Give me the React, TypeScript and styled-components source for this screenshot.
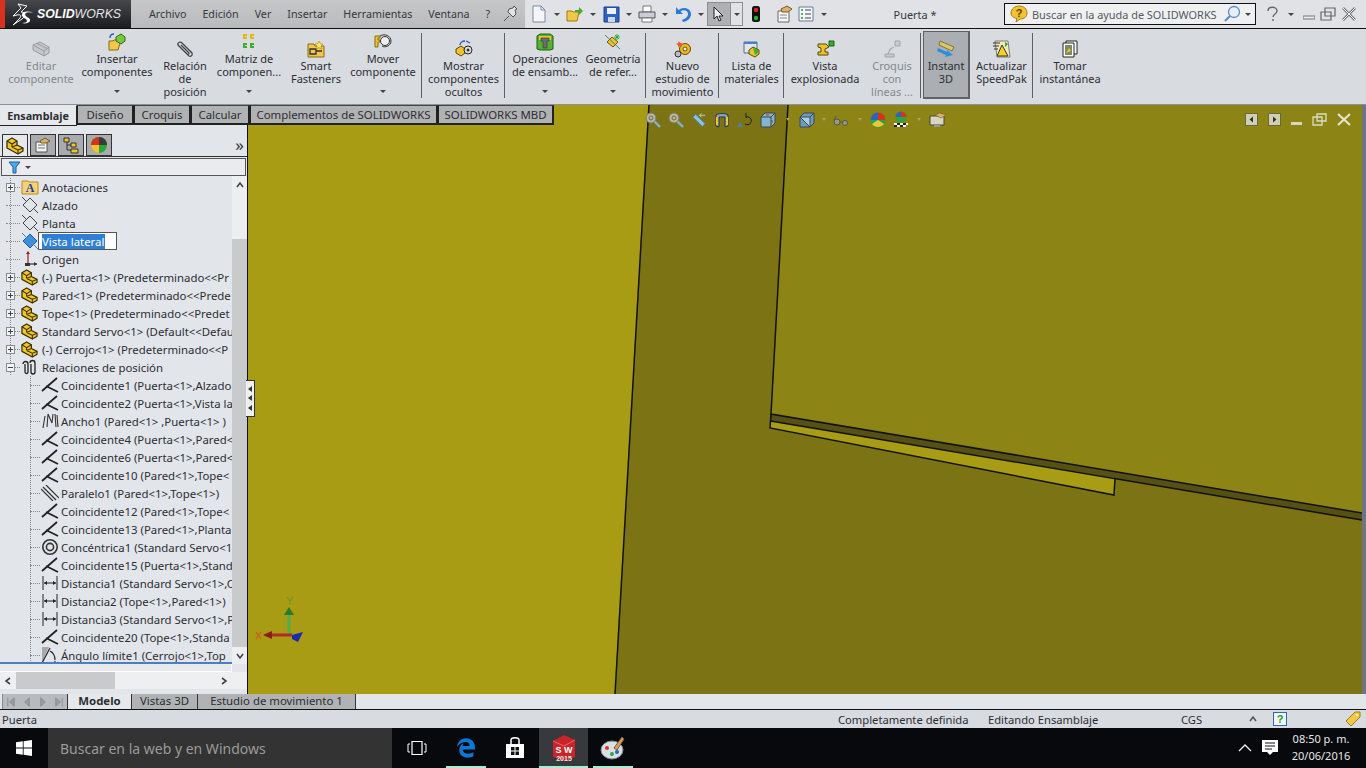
import React from 'react';
import styled, { createGlobalStyle } from 'styled-components';
import { FaEdgeLegacy } from 'react-icons/fa';

const GlobalStyle = createGlobalStyle`
  html, body {
    margin: 0;
    padding: 0;
    overflow: hidden;
    background: #d8dbe0;
  }
`;

const font = `"Noto Sans", "Open Sans", sans-serif`;

const Screen = styled.div`
  width: 1366px;
  height: 768px;
  display: flex;
  flex-direction: column;
  overflow: hidden;
  font-family: ${font};
  font-size: 11.4px;
  color: #2c2e32;
`;

/* ---------- title bar ---------- */
const TitleBar = styled.div`
  height: 28px;
  flex: none;
  display: flex;
  align-items: center;
  background: #e0e2e6;
  border-bottom: 1px solid #111;
`;

const Logo = styled.div`
  width: 126px;
  height: 28px;
  flex: none;
  display: flex;
  align-items: center;
  gap: 2px;
  padding-left: 4px;
  box-sizing: border-box;
  margin-left: 5px;
  background: linear-gradient(#46484c, #1b1c1f);
  position: relative;
  &::before {
    content: '';
    position: absolute;
    left: -5px;
    top: 0;
    width: 5px;
    height: 28px;
    background: #d8321f;
  }
`;

const LogoText = styled.span`
  font-family: "Liberation Sans", sans-serif;
  font-size: 12.3px;
  font-style: italic;
  font-weight: 700;
  color: #fff;
  em {
    font-weight: 400;
    color: #e4e4e4;
  }
`;

const MenuBar = styled.div`
  width: 394px;
  height: 28px;
  flex: none;
  display: flex;
  align-items: center;
  gap: 16px;
  padding-left: 18px;
  box-sizing: border-box;
  background: linear-gradient(#c6c7c9, #b9babc);
  color: #36383b;
  font-size: 10.7px;
`;

const MenuIcon = styled.span`
  margin-left: -4px;
  display: flex;
`;

const QuickBar = styled.div`
  width: 365px;
  flex: none;
  display: flex;
  align-items: center;
  padding-left: 3px;
  box-sizing: border-box;
`;

const QuickIcon = styled.span<{ $w?: number }>`
  width: ${(p) => p.$w ?? 22}px;
  height: 22px;
  flex: none;
  display: flex;
  align-items: center;
  justify-content: center;
`;

const SelectBox = styled.span`
  display: flex;
  height: 22px;
  border: 1px solid #8b8d90;
  margin: 0 2px 0 -1px;
`;

const SelectMain = styled.span`
  width: 22px;
  display: flex;
  align-items: center;
  justify-content: center;
  background: #aeb0b3;
`;

const SelectDrop = styled.span`
  width: 11px;
  display: flex;
  align-items: center;
  justify-content: center;
  border-left: 1px solid #8b8d90;
`;

const Caret = styled.span`
  display: block;
  flex: none;
  width: 0;
  height: 0;
  border-left: 3px solid transparent;
  border-right: 3px solid transparent;
  border-top: 3px solid #444;
  margin: 0 4px;
`;

const SelectCaret = styled(Caret)`
  margin: 0;
`;

const DocTitle = styled.div`
  width: 114px;
  flex: none;
  text-align: center;
  color: #36383b;
  font-size: 10.9px;
  padding-right: 64px;
  box-sizing: border-box;
`;

const HelpSearch = styled.div`
  width: 252px;
  height: 22px;
  flex: none;
  display: flex;
  align-items: center;
  box-sizing: border-box;
  border: 1px solid #111;
  background: #eef0f2;
  padding-left: 5px;
  color: #55585c;
  font-size: 10.9px;
  gap: 4px;
`;

const HelpSearchEnd = styled.span`
  margin-left: auto;
  display: flex;
  align-items: center;
`;

const WindowButtons = styled.div`
  display: flex;
  align-items: center;
  margin-left: 9px;
  gap: 5px;
`;

/* ---------- ribbon ---------- */
const Ribbon = styled.div`
  height: 75px;
  flex: none;
  display: flex;
  align-items: stretch;
  background: #d8dbe0;
  border-bottom: 1px solid #8e9094;
`;

const RibbonGroup = styled.div<{ $w: number; $divider?: boolean }>`
  width: ${(p) => p.$w}px;
  flex: none;
  display: flex;
  align-items: stretch;
  position: relative;
  ${(p) => p.$divider && `
    &::after {
      content: '';
      position: absolute;
      right: 0;
      top: 4px;
      height: 65px;
      width: 1px;
      background: #5c5e62;
    }
  `}
`;

const RibbonButton = styled.div<{ $w: number; $off?: boolean; $on?: boolean; $drop?: boolean }>`
  width: ${(p) => p.$w}px;
  flex: none;
  display: flex;
  flex-direction: column;
  align-items: center;
  text-align: center;
  line-height: 13px;
  box-sizing: border-box;
  white-space: nowrap;
  font-size: 11px;
  padding-top: ${(p) => (p.$drop ? 3 : p.$on ? 7 : 10)}px;
  color: ${(p) => (p.$off ? '#85888c' : '#2c2e32')};
  background: ${(p) => (p.$on ? '#abaeb3' : 'transparent')};
  ${(p) => p.$on && `
    border: 1px solid #5f6266;
    border-right-width: 2px;
    border-bottom-width: 2px;
    margin: 2px 0 5px 2px;
  `}
`;

const RibbonIcon = styled.div`
  height: 20px;
  flex: none;
  display: flex;
  align-items: center;
  justify-content: center;
`;

const RibbonCaret = styled.span`
  height: 13px;
  flex: none;
  margin-top: 7px;
  display: flex;
  align-items: center;
  justify-content: center;
`;

/* ---------- workspace ---------- */
const Workspace = styled.div`
  position: relative;
  flex: 1;
  min-height: 0;
  display: flex;
`;

const TabStrip = styled.div`
  position: absolute;
  left: 0;
  top: 0;
  height: 21px;
  display: flex;
  z-index: 3;
`;

const PageTab = styled.div<{ $w: number; $active?: boolean }>`
  width: ${(p) => p.$w}px;
  height: ${(p) => (p.$active ? 21 : 20)}px;
  flex: none;
  display: flex;
  align-items: center;
  justify-content: center;
  box-sizing: border-box;
  white-space: nowrap;
  padding-bottom: 1px;
  font-size: ${(p) => (p.$active ? 10.8 : 11.4)}px;
  font-weight: ${(p) => (p.$active ? 700 : 400)};
  color: #2c2e32;
  background: ${(p) => (p.$active ? '#e6e8ec' : '#b1b2b4')};
  border: 1px solid #222;
  border-left: ${(p) => (p.$active ? 'none' : '1px solid #222')};
  border-top: ${(p) => (p.$active ? '1px solid #e6e8ec' : '1px solid #444')};
  border-bottom-width: ${(p) => (p.$active ? 1 : 2)}px;
  border-right-width: ${(p) => (p.$active ? 1 : 2)}px;
`;

const Panel = styled.div`
  width: 248px;
  flex: none;
  display: flex;
  flex-direction: column;
  box-sizing: border-box;
  padding-top: 21px;
  background: #e2e5ea;
  border-right: 1px solid #111;
`;

const PanelTabs = styled.div`
  height: 30px;
  flex: none;
  display: flex;
  align-items: flex-end;
  padding: 0 0 0 2px;
  border-bottom: 1px solid #333;
`;

const PanelTab = styled.div<{ $active?: boolean }>`
  width: 26px;
  height: 22px;
  margin-right: 2px;
  display: flex;
  align-items: center;
  justify-content: center;
  box-sizing: border-box;
  background: ${(p) => (p.$active ? '#e6e8ec' : '#a9abae')};
  border: 1px solid #333;
  ${(p) => p.$active && 'border-bottom: none;'}
`;

const Chevron = styled.span`
  margin-left: auto;
  margin-right: 3px;
  margin-bottom: 3px;
  font-size: 17px;
  line-height: 17px;
  color: #333;
`;

const FilterRow = styled.div`
  height: 16px;
  flex: none;
  margin: 1px 1px 0 1px;
  border: 1px solid #555;
  background: #e9ebee;
  display: flex;
  align-items: center;
  padding-left: 6px;
`;

const TreeWrap = styled.div`
  height: 488px;
  flex: none;
  display: flex;
`;

const Tree = styled.div`
  width: 232px;
  flex: none;
  overflow: hidden;
  box-sizing: border-box;
  padding-top: 2px;
  border-bottom: 2px solid #4a7fc1;
`;

const dottedLine = 'repeating-linear-gradient(to bottom, #888 0 1px, transparent 1px 2px)';

const TreeRow = styled.div<{ $deep?: boolean }>`
  height: 18px;
  display: flex;
  align-items: center;
  white-space: nowrap;
  font-size: 11.4px;
  padding-left: ${(p) => (p.$deep ? 30 : 6)}px;
  background-image: ${dottedLine};
  background-size: 1px 100%;
  background-repeat: no-repeat;
  background-position: ${(p) => (p.$deep ? 30 : 10)}px 0;
`;

const Expander = styled.span`
  width: 9px;
  height: 9px;
  flex: none;
  box-sizing: border-box;
  border: 1px solid #8a8c90;
  background: #f2f3f5;
  position: relative;
  &::before {
    content: '';
    position: absolute;
    left: 1px;
    right: 1px;
    top: 3px;
    height: 1px;
    background: #444;
  }
`;

const ExpanderPlus = styled(Expander)`
  &::after {
    content: '';
    position: absolute;
    top: 1px;
    bottom: 1px;
    left: 3px;
    width: 1px;
    background: #444;
  }
`;

const TreeDots = styled.span<{ $w: number }>`
  width: ${(p) => p.$w}px;
  flex: none;
  border-top: 1px dotted #888;
`;

const TreeIcon = styled.span`
  width: 19px;
  height: 18px;
  flex: none;
  display: flex;
  align-items: center;
  justify-content: center;
  margin-right: 3px;
`;

const DeepIcon = styled(TreeIcon)`
  margin-right: 2px;
`;

const RenameBox = styled.span`
  display: inline-flex;
  align-items: center;
  width: 79px;
  height: 18px;
  margin-left: -4px;
  padding-left: 3px;
  box-sizing: border-box;
  background: #fff;
  border: 1px solid #555;
  span {
    background: #2f7fd6;
    color: #fff;
    line-height: 15px;
    padding-right: 1px;
  }
`;

const VScroll = styled.div`
  width: 15px;
  flex: none;
  display: flex;
  flex-direction: column;
  background: #eceef0;
`;

const ScrollArrow = styled.div`
  height: 17px;
  flex: none;
  display: flex;
  align-items: center;
  justify-content: center;
`;

const VThumbSpacer = styled.div`
  height: 46px;
  flex: none;
`;

const VThumb = styled.div`
  flex: 1;
  background: #c9cacc;
`;

const PanelBottomGap = styled.div`
  height: 7px;
  flex: none;
  margin-right: 15px;
  background: #e8eaee;
  border-right: 1px solid #fff;
  border-bottom: 1px solid #fff;
`;

const HScroll = styled.div`
  height: 17px;
  flex: none;
  display: flex;
  align-items: center;
  background: #eeeff1;
`;

const HArrow = styled.span`
  width: 16px;
  flex: none;
  display: flex;
  justify-content: center;
`;

const HThumb = styled.div`
  width: 99px;
  height: 17px;
  background: #c9cacc;
  margin-right: auto;
`;

const HScrollEnd = styled.span`
  width: 15px;
  flex: none;
`;

const Viewport = styled.div`
  position: relative;
  flex: 1;
  min-width: 0;
  overflow: hidden;
  background: #7c7414;
`;

const Scene = styled.svg`
  display: block;
`;

const HeadsUp = styled.div`
  position: absolute;
  left: 397px;
  top: 6px;
  display: flex;
  align-items: center;
  gap: 7px;
`;

const HudGap = styled.span<{ $w: number }>`
  width: ${(p) => p.$w}px;
  display: flex;
  justify-content: center;
  &::after {
    content: '';
    border-left: 2px solid transparent;
    border-right: 2px solid transparent;
    border-top: 3px solid #a8a268;
  }
`;

const ViewButtons = styled.div`
  position: absolute;
  right: 11px;
  top: 8px;
  display: flex;
  align-items: center;
  gap: 10px;
`;

const Triad = styled.svg`
  position: absolute;
  left: 7px;
  top: 490px;
`;

const CollapseHandle = styled.div`
  position: absolute;
  left: 246px;
  top: 275px;
  width: 9px;
  height: 37px;
  background: #eceef0;
  border: 1px solid #333;
  border-left: none;
  box-sizing: border-box;
  display: flex;
  flex-direction: column;
  align-items: center;
  justify-content: space-around;
  padding: 3px 0;
  z-index: 2;
`;

const HandleArrow = styled.span`
  width: 0;
  height: 0;
  border-top: 3px solid transparent;
  border-bottom: 3px solid transparent;
  border-right: 4px solid #333;
`;

const EdgeStrip = styled.div`
  width: 4px;
  flex: none;
  background: #6d7580;
`;

/* ---------- bottom tabs + status ---------- */
const BottomBar = styled.div`
  height: 15px;
  flex: none;
  display: flex;
  align-items: stretch;
  background: #e2e5ea;
  border-top: 1px solid #111;
  border-bottom: 1px solid #111;
  margin-top: -1px;
  padding-left: 2px;
`;

const Pager = styled.div`
  width: 66px;
  flex: none;
  display: flex;
  align-items: center;
  justify-content: space-around;
  box-sizing: border-box;
  background: #b8babd;
  border-right: 1px solid #333;
  border-left: 1px solid #888;
`;

const BottomTab = styled.div<{ $w: number; $active?: boolean }>`
  width: ${(p) => p.$w}px;
  flex: none;
  display: flex;
  align-items: center;
  justify-content: center;
  box-sizing: border-box;
  padding-bottom: 1px;
  font-size: 11.4px;
  line-height: 12px;
  font-weight: ${(p) => (p.$active ? 700 : 400)};
  background: ${(p) => (p.$active ? '#e6e8ec' : '#b1b2b4')};
  border-right: 1px solid #333;
`;

const StatusBar = styled.div`
  height: 18px;
  flex: none;
  display: flex;
  align-items: center;
  background: #d8dbe0;
  padding-left: 2px;
  font-size: 11.2px;
`;

const StatusCell = styled.span<{ $w: number }>`
  width: ${(p) => p.$w}px;
  flex: none;
  display: flex;
  align-items: center;
`;

const TaskBar = styled.div`
  height: 40px;
  flex: none;
  display: flex;
  align-items: center;
  background: #07090c;
  color: #fff;
`;

const StartButton = styled.div`
  width: 48px;
  height: 100%;
  flex: none;
  display: flex;
  align-items: center;
  justify-content: center;
`;

const SearchBox = styled.div`
  width: 344px;
  height: 100%;
  flex: none;
  display: flex;
  align-items: center;
  padding-left: 12px;
  box-sizing: border-box;
  background: #333333;
  color: #9a9a9a;
  font-size: 14px;
`;

const TaskIcon = styled.div<{ $active?: boolean; $run?: boolean }>`
  position: relative;
  width: 49px;
  height: 100%;
  flex: none;
  display: flex;
  align-items: center;
  justify-content: center;
  background: ${(p) => (p.$active ? '#37393c' : 'transparent')};
  ${(p) => (p.$active || p.$run) && `
    &::after {
      content: '';
      position: absolute;
      bottom: 0;
      height: 2px;
      left: ${p.$active ? 0 : 5}px;
      right: ${p.$active ? 0 : 4}px;
      background: #a6ecd0;
    }
  `}
`;

const Tray = styled.div`
  margin-left: auto;
  display: flex;
  align-items: center;
  gap: 10px;
  height: 100%;
`;

const Clock = styled.div`
  width: 66px;
  margin: 0 12px 2px 0;
  text-align: center;
  line-height: 17px;
  font-size: 11px;
  color: #e8e8e8;
`;

/* ---------- drawings ---------- */
const Cube = ({ size = 18 }: { size?: number }) => (
  <svg width={size} height={size} viewBox="0 0 18 18">
    <path d="M1 4l5-3 5 3v4l6 3v3l-5 3L1 11z" fill="#f2c623" stroke="#3a3000" strokeWidth="1.300" strokeLinejoin="round" />
    <path d="M1 4l5 3 5-3M6 7v3M6 10l6 3v4M12 13l5-2M6 10l5-2" fill="none" stroke="#3a3000" strokeWidth="1.100" />
  </svg>
);

const Plane = ({ active }: { active?: boolean }) => (
  <svg width="18" height="18" viewBox="0 0 18 18">
    <path d="M9 2l7 7-7 7-7-7z" fill={active ? '#3f8fdc' : 'none'} stroke={active ? '#1d5da8' : '#444'} />
    <path d="M1 1l5 5M12 12l5 5" stroke={active ? '#2f7fd6' : '#444'} />
  </svg>
);

const Coincident = () => (
  <svg width="18" height="16" viewBox="0 0 18 16">
    <path d="M16 1L1 14M5 9l12 6" fill="none" stroke="#222" strokeWidth="1.800" />
  </svg>
);

const Parallel = () => (
  <svg width="18" height="16" viewBox="0 0 18 16">
    <path d="M2 2l13 13M5 0l13 13M0 4l12 12" fill="none" stroke="#333" strokeWidth="1.200" />
  </svg>
);

const Width = () => (
  <svg width="18" height="16" viewBox="0 0 18 16">
    <path d="M2 15L4 3M6 14L7 1M7 1l4 9M11 10l1-9M14 1l1 13M16 2l1 12" fill="none" stroke="#333" strokeWidth="1.100" />
  </svg>
);

const Concentric = () => (
  <svg width="18" height="18" viewBox="0 0 18 18">
    <circle cx="9" cy="9" r="7.200" fill="none" stroke="#333" strokeWidth="1.600" />
    <circle cx="9" cy="9" r="3.600" fill="none" stroke="#333" strokeWidth="1.600" />
  </svg>
);

const Distance = () => (
  <svg width="18" height="16" viewBox="0 0 18 16">
    <path d="M2 1v14M16 1v14M3 8h12" stroke="#222" fill="none" />
    <path d="M3 8l3-2v4zM15 8l-3-2v4z" fill="#222" />
  </svg>
);

const Limit = () => (
  <svg width="18" height="18" viewBox="0 0 18 18">
    <path d="M1 1h7L1 16z" fill="#aaa" />
    <path d="M1 17L9 2M1 17h16M9 5c4 2 5 6 5 9M14 15v3" fill="none" stroke="#222" strokeWidth="1.200" />
  </svg>
);

const Folder = () => (
  <svg width="18" height="16" viewBox="0 0 18 16">
    <path d="M1 2h6l1 1h9v12H1z" fill="#f3d37a" stroke="#b98a20" />
    <text x="9" y="13" fontSize="12" fontWeight="700" fontFamily="Liberation Serif" textAnchor="middle" fill="#1d3f9a">A</text>
  </svg>
);

const Origin = () => (
  <svg width="16" height="16" viewBox="0 0 16 16">
    <path d="M6 2v11" stroke="#9c1c1c" strokeWidth="1.200" />
    <path d="M6 0l2 3H4z" fill="#9c1c1c" />
    <path d="M6 13h9" stroke="#333" strokeWidth="1.200" />
    <path d="M15 13l-3-2v4zM3 12h5v3H3z" fill="#333" />
  </svg>
);

const Clips = () => (
  <svg width="18" height="17" viewBox="0 0 18 17">
    <path d="M2 5a2.500 2.500 0 015 0v8a1.500 1.500 0 01-3 0V5M9 4a2.500 2.500 0 015 0v9a2 2 0 01-4 0V5" fill="none" stroke="#222" strokeWidth="1.300" />
  </svg>
);

const Tri = ({ dir = 'up', color = '#444' }: { dir?: 'up' | 'down' | 'left' | 'right'; color?: string }) => {
  const d = { up: 'M2 7l3-4 3 4', down: 'M2 3l3 4 3-4', left: 'M7 2L3 5l4 3', right: 'M3 2l4 3-4 3' }[dir];
  return (
    <svg width="10" height="10" viewBox="0 0 10 10">
      <path d={d} fill="none" stroke={color} strokeWidth="1.600" />
    </svg>
  );
};

const PagerIcon = ({ d }: { d: string }) => (
  <svg width="12" height="12" viewBox="0 0 13 13">
    <path d={d} fill="#9b9da0" stroke="#8a8c90" />
  </svg>
);

const Ic = {
  edit: (
    <svg width="20" height="18" viewBox="0 0 20 18">
      <path d="M2 5l7-3 9 5v6l-5 3-11-6z" fill="#c5c7ca" stroke="#9a9c9f" />
      <path d="M2 5l11 6v5M13 11l5-4M6 3.500l10 5" fill="none" stroke="#9a9c9f" />
    </svg>
  ),
  insert: (
    <svg width="18" height="18" viewBox="0 0 18 18">
      <path d="M1 8h4l1-1h7l-3 10H1z" fill="#f2c84a" stroke="#8a6a10" />
      <path d="M8 4l5-3 4 3v4l-4 3-5-3z" fill="#76c93a" stroke="#2c6a10" />
      <path d="M2 5c0-3 2-4 4-4" fill="none" stroke="#2a55c8" strokeWidth="1.400" />
    </svg>
  ),
  mate: (
    <svg width="18" height="18" viewBox="0 0 18 18">
      <path d="M5 8l8 8c2 1 4-1 3-3L6 3C4 1 1 3 2 5l9 9c1 1 2 0 2-1L5 5" fill="none" stroke="#444" strokeWidth="1.300" />
    </svg>
  ),
  pattern: (
    <svg width="16" height="18" viewBox="0 0 16 18">
      <path d="M2 1h4v2H4v1h2v2H2zM9 1h4v2h-2v1h2v2H9z" fill="#e9b80f" />
      <path d="M2 10h4v2H4v1h2v2H2zM9 10h4v2h-2v1h2v2H9z" fill="#3cae2b" />
    </svg>
  ),
  fastener: (
    <svg width="18" height="18" viewBox="0 0 18 18">
      <path d="M1 4h6l1 2h9v11H1z" fill="#f0c550" stroke="#8a6a10" />
      <path d="M3 9h6v5H3zM9 11h6" fill="none" stroke="#333" strokeWidth="1.300" />
      <path d="M12 1l1.300 2.600L16 4l-2 2 .5 3-2.500-1.500L9.500 9l.5-3-2-2 2.700-.4z" fill="#fbe36a" stroke="#a8860f" strokeWidth=".6" />
    </svg>
  ),
  move: (
    <svg width="18" height="18" viewBox="0 0 18 18">
      <path d="M1 3h5v2H4v2h2v2H4v5H1z" fill="#ecc42a" stroke="#8a6a10" />
      <circle cx="11" cy="8" r="4.500" fill="#eee" stroke="#333" />
      <path d="M6 3c5-3 11 0 11 5s-6 7-9 5" fill="none" stroke="#333" />
    </svg>
  ),
  hidden: (
    <svg width="20" height="18" viewBox="0 0 20 18">
      <path d="M2 9l5-3 4 3v4l-4 3-5-3z" fill="#eec32c" stroke="#5e4a08" />
      <circle cx="14" cy="10" r="4" fill="#ddd" stroke="#222" />
      <circle cx="14" cy="10" r="1.500" fill="#333" />
      <path d="M6 5c0-2 2-4 5-4M12 1l4 2" fill="none" stroke="#2a55c8" strokeWidth="1.300" />
    </svg>
  ),
  ops: (
    <svg width="18" height="18" viewBox="0 0 18 18">
      <path d="M1 3l3-2h10l3 2v13l-3 1H4l-3-1z" fill="#52b236" stroke="#205c10" />
      <path d="M3 3h12v4H3z" fill="#ecc42a" />
      <path d="M5 5h8v3h-2v7H7V8H5z" fill="#6e6e6e" stroke="#333" strokeWidth=".6" />
    </svg>
  ),
  ref: (
    <svg width="18" height="18" viewBox="0 0 18 18">
      <path d="M8 4l6 5-5 5-6-5z" fill="#ecc42a" stroke="#6a5a10" />
      <path d="M1 2l15 14" stroke="#2c6a8a" strokeWidth=".8" />
      <path d="M13 1v6M10 4h6M11 2l4 4M15 2l-4 4" stroke="#2aa82a" strokeWidth=".9" />
    </svg>
  ),
  study: (
    <svg width="18" height="18" viewBox="0 0 18 18">
      <circle cx="11" cy="9" r="5.500" fill="#efb820" stroke="#6a4a08" />
      <circle cx="11" cy="9" r="2" fill="#fff" stroke="#6a4a08" />
      <circle cx="4" cy="14" r="3" fill="#bbb" stroke="#333" />
      <path d="M5 1l1 2 2 0-1 2 1 2-2-1-2 1 0-2-2-1 2-1z" fill="#f05a1e" />
    </svg>
  ),
  bom: (
    <svg width="18" height="18" viewBox="0 0 18 18">
      <path d="M1 2h13v11H1z" fill="#dfe6f2" stroke="#5a6a8a" />
      <path d="M1 2h13v2H1z" fill="#4f7dc8" />
      <path d="M6 10l4-3 6 3v4l-4 3-6-3z" fill="#eec32c" stroke="#5e4a08" />
      <path d="M10 8l5 2v3l-3 2z" fill="#3eb22b" />
    </svg>
  ),
  explode: (
    <svg width="20" height="18" viewBox="0 0 20 18">
      <path d="M3 4h8l3 3-4 2v3h3v3H3v-3h3V8L3 7z" fill="#ecc42a" stroke="#5a4708" />
      <path d="M14 1h5v5h-5z" fill="#3cae2b" stroke="#205c10" />
    </svg>
  ),
  sketchOff: (
    <svg width="20" height="18" viewBox="0 0 20 18">
      <path d="M13 1h5v5h-5zM3 14h9v3H3zM6 14l2-5 4-2" fill="#c9cbce" stroke="#a2a4a7" />
    </svg>
  ),
  instant: (
    <svg width="18" height="18" viewBox="0 0 18 18">
      <path d="M3 1l14 6-2 4L2 5z" fill="#d8c66a" stroke="#6a5a10" strokeWidth=".7" />
      <path d="M1 8l9 4 0-2 6 5-8 2 1-2-9-4z" fill="#2a8fe0" />
    </svg>
  ),
  speedpak: (
    <svg width="20" height="18" viewBox="0 0 20 18">
      <path d="M3 1h13l2 16H5z" fill="#efe9c0" stroke="#555" strokeWidth=".7" />
      <path d="M10 5l6 11H5z" fill="#f4d21f" stroke="#333" />
      <path d="M1 3h7M1 6h6M2 9h4" stroke="#333" />
      <path d="M13 2l3 2-3 3z" fill="#36a62a" />
    </svg>
  ),
  snapshot: (
    <svg width="16" height="18" viewBox="0 0 16 18">
      <path d="M4 1h11v13H4z" fill="#fff" stroke="#222" />
      <path d="M1 3h11v14H1z" fill="#fff" stroke="#222" />
      <path d="M3 5h7v10H3z" fill="#7c8a6a" />
      <path d="M4 13l3-5 2 3z" fill="#e9c42a" />
    </svg>
  ),
};

const ZoomGlass = ({ fill }: { fill: string }) => (
  <svg width="16" height="16" viewBox="0 0 16 16">
    <path d="M9 9l6 6" stroke="#7fb2d8" strokeWidth="2.400" />
    <circle cx="6" cy="6" r="5" fill={fill} stroke="#777" />
    <circle cx="6" cy="6" r="2" fill="none" stroke="#666" />
  </svg>
);

const mates: { label: string; icon: React.ReactNode }[] = [
  { label: 'Coincidente1 (Puerta<1>,Alzado', icon: <Coincident /> },
  { label: 'Coincidente2 (Puerta<1>,Vista la', icon: <Coincident /> },
  { label: 'Ancho1 (Pared<1> ,Puerta<1> )', icon: <Width /> },
  { label: 'Coincidente4 (Puerta<1>,Pared<', icon: <Coincident /> },
  { label: 'Coincidente6 (Puerta<1>,Pared<', icon: <Coincident /> },
  { label: 'Coincidente10 (Pared<1>,Tope<', icon: <Coincident /> },
  { label: 'Paralelo1 (Pared<1>,Tope<1>)', icon: <Parallel /> },
  { label: 'Coincidente12 (Pared<1>,Tope<', icon: <Coincident /> },
  { label: 'Coincidente13 (Pared<1>,Planta', icon: <Coincident /> },
  { label: 'Concéntrica1 (Standard Servo<1', icon: <Concentric /> },
  { label: 'Coincidente15 (Puerta<1>,Stand', icon: <Coincident /> },
  { label: 'Distancia1 (Standard Servo<1>,C', icon: <Distance /> },
  { label: 'Distancia2 (Tope<1>,Pared<1>)', icon: <Distance /> },
  { label: 'Distancia3 (Standard Servo<1>,P', icon: <Distance /> },
  { label: 'Coincidente20 (Tope<1>,Standa', icon: <Coincident /> },
  { label: 'Ángulo límite1 (Cerrojo<1>,Top', icon: <Limit /> },
];

const parts = [
  '(-) Puerta<1> (Predeterminado<<Pr',
  'Pared<1> (Predeterminado<<Prede',
  'Tope<1> (Predeterminado<<Predet',
  'Standard Servo<1> (Default<<Defau',
  '(-) Cerrojo<1> (Predeterminado<<P',
];

const CaretRow = () => (
  <RibbonCaret>
    <Caret />
  </RibbonCaret>
);

export default function App() {
  return (
    <Screen>
      <GlobalStyle />
      <TitleBar>
        <Logo>
          <svg width="26" height="26" viewBox="0 0 26 26">
            <path d="M9 3l9 2-6 6c5 0 5 4 1 7l-9 6 6-6c3-3 2-5-2-4l-4 1 8-8z" fill="none" stroke="#fff" strokeWidth="1" />
            <path d="M24 12c-3-1-7-1-8 1-1 3 6 3 5 7-1 2-5 3-8 2 3 0 5-1 5-2 0-3-6-3-5-7 1-3 7-3 11-1z" fill="#fff" />
          </svg>
          <LogoText>SOLID<em>WORKS</em></LogoText>
        </Logo>
        <MenuBar>
          <span>Archivo</span>
          <span>Edición</span>
          <span>Ver</span>
          <span>Insertar</span>
          <span>Herramientas</span>
          <span>Ventana</span>
          <span>?</span>
          <MenuIcon>
            <svg width="18" height="18" viewBox="0 0 18 18">
              <path d="M7 11L2 16M6 7l5 5 3-3-1-4 2-1-3-3-1 2-4 1z" fill="#e4e4e4" stroke="#555" />
            </svg>
          </MenuIcon>
        </MenuBar>
        <QuickBar>
          <QuickIcon>
            <svg width="16" height="18" viewBox="0 0 16 18">
              <path d="M2 1h8l4 4v12H2z" fill="#f4f6fa" stroke="#7a8aa8" />
              <path d="M10 1v4h4" fill="none" stroke="#7a8aa8" />
            </svg>
          </QuickIcon>
          <Caret />
          <QuickIcon>
            <svg width="18" height="18" viewBox="0 0 18 18">
              <path d="M1 6h5l1 1h6l-2 9H1z" fill="#f2c84a" stroke="#a07a12" />
              <path d="M9 5h4V2l4 4-4 4V7H9z" fill="#3fae2a" />
            </svg>
          </QuickIcon>
          <Caret />
          <QuickIcon>
            <svg width="17" height="17" viewBox="0 0 17 17">
              <path d="M1 1h15v15H1z" fill="#2f63c2" stroke="#1b3f8a" />
              <path d="M4 2h9v6H4z" fill="#eef2fa" />
              <path d="M5 11h7v5H5z" fill="#cfd6e4" />
            </svg>
          </QuickIcon>
          <Caret />
          <QuickIcon>
            <svg width="18" height="18" viewBox="0 0 18 18">
              <path d="M5 1h8v6H5z" fill="#fff" stroke="#777" />
              <path d="M1 7h16v6H1z" fill="#c9ced6" stroke="#555" />
              <path d="M4 13h10v4H4z" fill="#fff" stroke="#777" />
            </svg>
          </QuickIcon>
          <Caret />
          <QuickIcon>
            <svg width="18" height="18" viewBox="0 0 18 18">
              <path d="M2 2v7h7L6.500 6.500C9 4.500 14 5 14 9c0 3-3 5-6 6l1 2c5-1 8-4 8-8 0-6-8-8-12.500-4z" fill="#2a78d8" />
            </svg>
          </QuickIcon>
          <Caret />
          <SelectBox>
            <SelectMain>
              <svg width="14" height="16" viewBox="0 0 14 16">
                <path d="M2 1v12l3-3 2 5 2-1-2-4h4z" fill="#eee" stroke="#222" />
              </svg>
            </SelectMain>
            <SelectDrop><SelectCaret /></SelectDrop>
          </SelectBox>
          <QuickIcon>
            <svg width="10" height="18" viewBox="0 0 10 18">
              <rect x="1" y="1" width="8" height="16" rx="2.500" fill="#111" />
              <circle cx="5" cy="5" r="2.200" fill="#d62a20" />
              <circle cx="5" cy="13" r="2.200" fill="#25b135" />
            </svg>
          </QuickIcon>
          <QuickIcon $w={6} />
          <QuickIcon>
            <svg width="18" height="18" viewBox="0 0 18 18">
              <path d="M3 6h11v11H3z" fill="#f5f5f5" stroke="#666" />
              <path d="M5 10h7M5 13h7" stroke="#888" />
              <path d="M6 4l6-3 5 3-4 3H7z" fill="#d9b070" stroke="#7a5a20" />
            </svg>
          </QuickIcon>
          <QuickIcon>
            <svg width="16" height="16" viewBox="0 0 16 16">
              <path d="M1 1h14v14H1z" fill="#f4f6fa" stroke="#6a7a98" />
              <path d="M7 4h6M7 8h6M7 12h6" stroke="#444" />
              <path d="M3 4h2M3 8h2M3 12h2" stroke="#2a9a2a" strokeWidth="1.400" />
            </svg>
          </QuickIcon>
          <Caret />
        </QuickBar>
        <DocTitle>Puerta *</DocTitle>
        <HelpSearch>
          <svg width="18" height="18" viewBox="0 0 18 18">
            <path d="M9 1c5 0 8 3 8 7s-3 6-7 6l-4 3 1-3.500C3 12.500 1 11 1 8c0-4 4-7 8-7z" fill="#f4c430" stroke="#a67c10" />
            <text x="9" y="12" fontSize="11" fontWeight="700" fontFamily="Liberation Sans" textAnchor="middle" fill="#5a3c00">?</text>
          </svg>
          Buscar en la ayuda de SOLIDWORKS
          <HelpSearchEnd>
            <svg width="18" height="18" viewBox="0 0 18 18">
              <circle cx="11" cy="7" r="5.500" fill="#e8f1fa" stroke="#5a8ec4" strokeWidth="1.300" />
              <path d="M7 11l-5 5" stroke="#5a8ec4" strokeWidth="2.200" />
            </svg>
            <Caret />
          </HelpSearchEnd>
        </HelpSearch>
        <WindowButtons>
          <svg width="14" height="16" viewBox="0 0 14 16">
            <path d="M3 5c0-5 9-5 9 0 0 3-4 3-4 6M8 13v2" fill="none" stroke="#666" strokeWidth="1.400" />
          </svg>
          <Caret />
          <svg width="12" height="12" viewBox="0 0 12 12">
            <path d="M0 8h12v3H0z" fill="#e8eaed" stroke="#777" />
          </svg>
          <svg width="16" height="14" viewBox="0 0 16 14">
            <path d="M5 1h10v8H5zM1 5h10v8H1z" fill="#e2e4e8" stroke="#666" strokeWidth="1.200" />
          </svg>
          <svg width="16" height="14" viewBox="0 0 16 14">
            <path d="M2 1l12 12M14 1L2 13" stroke="#777" strokeWidth="2.600" />
            <path d="M2 1l12 12M14 1L2 13" stroke="#f2f3f4" strokeWidth="1" />
          </svg>
        </WindowButtons>
      </TitleBar>

      <Ribbon>
        <RibbonGroup $w={422} $divider>
          <RibbonButton $w={82} $off><RibbonIcon>{Ic.edit}</RibbonIcon>Editar<br />componente</RibbonButton>
          <RibbonButton $w={70} $drop><RibbonIcon>{Ic.insert}</RibbonIcon>Insertar<br />componentes<CaretRow /></RibbonButton>
          <RibbonButton $w={66}><RibbonIcon>{Ic.mate}</RibbonIcon>Relación<br />de<br />posición</RibbonButton>
          <RibbonButton $w={62} $drop><RibbonIcon>{Ic.pattern}</RibbonIcon>Matriz de<br />componen...<CaretRow /></RibbonButton>
          <RibbonButton $w={72}><RibbonIcon>{Ic.fastener}</RibbonIcon>Smart<br />Fasteners</RibbonButton>
          <RibbonButton $w={62} $drop><RibbonIcon>{Ic.move}</RibbonIcon>Mover<br />componente<CaretRow /></RibbonButton>
        </RibbonGroup>
        <RibbonGroup $w={83} $divider>
          <RibbonButton $w={83}><RibbonIcon>{Ic.hidden}</RibbonIcon>Mostrar<br />componentes<br />ocultos</RibbonButton>
        </RibbonGroup>
        <RibbonGroup $w={141} $divider>
          <RibbonButton $w={80} $drop><RibbonIcon>{Ic.ops}</RibbonIcon>Operaciones<br />de ensamb...<CaretRow /></RibbonButton>
          <RibbonButton $w={56} $drop><RibbonIcon>{Ic.ref}</RibbonIcon>Geometría<br />de refer...<CaretRow /></RibbonButton>
        </RibbonGroup>
        <RibbonGroup $w={73} $divider>
          <RibbonButton $w={73}><RibbonIcon>{Ic.study}</RibbonIcon>Nuevo<br />estudio de<br />movimiento</RibbonButton>
        </RibbonGroup>
        <RibbonGroup $w={65} $divider>
          <RibbonButton $w={65}><RibbonIcon>{Ic.bom}</RibbonIcon>Lista de<br />materiales</RibbonButton>
        </RibbonGroup>
        <RibbonGroup $w={137} $divider>
          <RibbonButton $w={82}><RibbonIcon>{Ic.explode}</RibbonIcon>Vista<br />explosionada</RibbonButton>
          <RibbonButton $w={52} $off><RibbonIcon>{Ic.sketchOff}</RibbonIcon>Croquis<br />con<br />líneas ...</RibbonButton>
        </RibbonGroup>
        <RibbonGroup $w={112} $divider>
          <RibbonButton $w={47} $on><RibbonIcon>{Ic.instant}</RibbonIcon>Instant<br />3D</RibbonButton>
          <RibbonButton $w={63}><RibbonIcon>{Ic.speedpak}</RibbonIcon>Actualizar<br />SpeedPak</RibbonButton>
        </RibbonGroup>
        <RibbonGroup $w={74}>
          <RibbonButton $w={74}><RibbonIcon>{Ic.snapshot}</RibbonIcon>Tomar<br />instantánea</RibbonButton>
        </RibbonGroup>
      </Ribbon>

      <Workspace>
        <TabStrip>
          <PageTab $w={77} $active>Ensamblaje</PageTab>
          <PageTab $w={57}>Diseño</PageTab>
          <PageTab $w={57}>Croquis</PageTab>
          <PageTab $w={59}>Calcular</PageTab>
          <PageTab $w={188}>Complementos de SOLIDWORKS</PageTab>
          <PageTab $w={116}>SOLIDWORKS MBD</PageTab>
        </TabStrip>

        <Panel>
          <PanelTabs>
            <PanelTab $active><Cube /></PanelTab>
            <PanelTab>
              <svg width="18" height="16" viewBox="0 0 18 16">
                <path d="M2 5h11v10H2z" fill="#f2f2f2" stroke="#555" />
                <path d="M4 8h7M4 11h7" stroke="#777" />
                <path d="M6 4l5-3 5 3-4 2H7z" fill="#d9b070" stroke="#7a5a20" />
              </svg>
            </PanelTab>
            <PanelTab>
              <svg width="18" height="17" viewBox="0 0 18 17">
                <path d="M5 3v10h5M5 8h5" fill="none" stroke="#333" />
                <path d="M2 1h5v4H2zM9 6h5v4H9zM9 12h7v4H9z" fill="#f2c623" stroke="#333" />
              </svg>
            </PanelTab>
            <PanelTab>
              <svg width="18" height="18" viewBox="0 0 18 18">
                <circle cx="9" cy="9" r="8" fill="#2aa63a" />
                <path d="M9 9V1a8 8 0 018 8z" fill="#3a3a3a" />
                <path d="M9 9V1a8 8 0 00-8 8z" fill="#d8321f" />
                <path d="M1 9a8 8 0 008 8V9z" fill="#f4c430" />
              </svg>
            </PanelTab>
            <Chevron>»</Chevron>
          </PanelTabs>
          <FilterRow>
            <svg width="13" height="13" viewBox="0 0 13 13">
              <path d="M1 1h11L8 6v6H5V6z" fill="#4fa8e8" stroke="#1d5da8" />
            </svg>
            <Caret />
          </FilterRow>
          <TreeWrap>
            <Tree>
              <TreeRow>
                <ExpanderPlus /><TreeDots $w={5} /><TreeIcon><Folder /></TreeIcon>Anotaciones
              </TreeRow>
              <TreeRow>
                <TreeDots $w={14} /><TreeIcon><Plane /></TreeIcon>Alzado
              </TreeRow>
              <TreeRow>
                <TreeDots $w={14} /><TreeIcon><Plane /></TreeIcon>Planta
              </TreeRow>
              <TreeRow>
                <TreeDots $w={14} /><TreeIcon><Plane active /></TreeIcon>
                <RenameBox><span>Vista lateral</span></RenameBox>
              </TreeRow>
              <TreeRow>
                <TreeDots $w={14} /><TreeIcon><Origin /></TreeIcon>Origen
              </TreeRow>
              {parts.map((p) => (
                <TreeRow key={p}>
                  <ExpanderPlus /><TreeDots $w={5} /><TreeIcon><Cube size={17} /></TreeIcon>{p}
                </TreeRow>
              ))}
              <TreeRow>
                <Expander /><TreeDots $w={5} /><TreeIcon><Clips /></TreeIcon>Relaciones de posición
              </TreeRow>
              {mates.map((t) => (
                <TreeRow $deep key={t.label}>
                  <TreeDots $w={10} /><DeepIcon>{t.icon}</DeepIcon>{t.label}
                </TreeRow>
              ))}
            </Tree>
            <VScroll>
              <ScrollArrow><Tri dir="up" /></ScrollArrow>
              <VThumbSpacer />
              <VThumb />
              <ScrollArrow><Tri dir="down" /></ScrollArrow>
            </VScroll>
          </TreeWrap>
          <PanelBottomGap />
          <HScroll>
            <HArrow><Tri dir="left" /></HArrow>
            <HThumb />
            <HArrow><Tri dir="right" /></HArrow>
            <HScrollEnd />
          </HScroll>
        </Panel>

        <CollapseHandle>
          <HandleArrow />
          <HandleArrow />
          <HandleArrow />
        </CollapseHandle>

        <Viewport>
          <Scene width="1114" height="589" viewBox="248 105 1114 589">
            <rect x="248" y="105" width="1114" height="589" fill="#7c7414" />
            <path d="M248 105H649L615 694H248z" fill="#a89c14" />
            <path d="M788 105H1362V513L771 414z" fill="#8c8414" />
            <path d="M771 414L1362 513V520L770.500 421z" fill="#565014" />
            <path d="M770.500 421L1115 478V495L770 428z" fill="#a89c14" />
            <g fill="none" stroke="#111" strokeWidth="1.500">
              <path d="M649 105L615 694" />
              <path d="M788 105L771 414L1362 513" />
              <path d="M771 414L770 428L1114 495L1115 478" />
              <path d="M770.500 421L1362 520" />
            </g>
          </Scene>

          <HeadsUp>
            <ZoomGlass fill="#b8b89a" />
            <ZoomGlass fill="#c0b88a" />
            <svg width="16" height="16" viewBox="0 0 17 16">
              <path d="M2 5l3-3 10 10-3 3z" fill="#8ec2e0" stroke="#4a7a9a" />
              <path d="M9 3h6M11 1l-2 2 2 2" fill="none" stroke="#c8d0c0" />
            </svg>
            <svg width="16" height="16" viewBox="0 0 16 16">
              <path d="M2 3c3-2 9-2 12 0v11l-3 1V5H5v10l-3-1z" fill="#7fa8c0" stroke="#334" />
              <path d="M3 5v8M13 5v8" stroke="#e8c83a" strokeWidth="2" />
            </svg>
            <svg width="16" height="16" viewBox="0 0 16 16">
              <path d="M9 5a4 4 0 11-1 7" fill="none" stroke="#222" />
              <path d="M0 15l3-5 3 5z" fill="#5a80a0" />
              <path d="M9 1v5" stroke="#222" />
            </svg>
            <svg width="16" height="16" viewBox="0 0 16 16">
              <path d="M1 5l4-4h10v10l-4 4H1z" fill="#7fb6d0" stroke="#444" />
              <path d="M1 5h10v10M11 5l4-4" fill="none" stroke="#444" />
              <path d="M6 3h3M12 8v3" stroke="#c03020" />
            </svg>
            <HudGap $w={9} />
            <svg width="16" height="16" viewBox="0 0 16 16">
              <path d="M1 5l4-4h10v10l-4 4H1z" fill="#6a9cc0" stroke="#445" />
              <path d="M1 5h10v10zM11 5l4-4" fill="#a8cfe0" stroke="#445" />
            </svg>
            <HudGap $w={4} />
            <svg width="17" height="12" viewBox="0 0 17 12">
              <circle cx="4" cy="8" r="3" fill="#9a9a80" stroke="#555" />
              <circle cx="12" cy="9" r="2.500" fill="#9a9a80" stroke="#555" />
              <path d="M1 6l2-4M7 8l3 0" fill="none" stroke="#555" />
            </svg>
            <HudGap $w={6} />
            <svg width="16" height="16" viewBox="0 0 16 16">
              <circle cx="8" cy="8" r="7.500" fill="#2aa63a" />
              <path d="M8 8V.5A7.500 7.500 0 0115.500 8z" fill="#d8321f" />
              <path d="M8 8V.5A7.500 7.500 0 00.500 8z" fill="#2f63c2" />
              <path d="M8 8l6 4a7.500 7.500 0 01-12 0z" fill="#e8c83a" />
            </svg>
            <svg width="16" height="17" viewBox="0 0 16 17">
              <circle cx="8" cy="6" r="5.500" fill="#2aa63a" />
              <path d="M8 6V.5A5.500 5.500 0 0113.500 6z" fill="#d8321f" />
              <path d="M8 6V.5A5.500 5.500 0 002.500 6z" fill="#2f63c2" />
              <path d="M1 12h3v2H1zM7 12h3v2H7zM13 12h2v2h-2zM4 14h3v2H4zM10 14h3v2h-3z" fill="#f4f4f4" />
              <path d="M4 12h3v2H4zM10 12h3v2h-3zM1 14h3v2H1zM7 14h3v2H7z" fill="#222" />
            </svg>
            <HudGap $w={6} />
            <svg width="18" height="16" viewBox="0 0 18 16">
              <path d="M1 4h14v9H1z" fill="#d8d6c0" stroke="#444" />
              <path d="M5 13h6v2H5z" fill="#999" />
              <path d="M6 3l5-2 6 2-5 3z" fill="#d9b070" stroke="#7a5a20" strokeWidth=".6" />
            </svg>
          </HeadsUp>

          <ViewButtons>
            <svg width="13" height="13" viewBox="0 0 13 13">
              <rect x=".5" y=".5" width="12" height="12" fill="#cfcfb4" stroke="#6a6640" />
              <path d="M8 3.500L4.500 6.500 8 9.500z" fill="#333" />
            </svg>
            <svg width="13" height="13" viewBox="0 0 13 13">
              <rect x=".5" y=".5" width="12" height="12" fill="#cfcfb4" stroke="#6a6640" />
              <path d="M5 3.500l3.500 3L5 9.500z" fill="#333" />
            </svg>
            <svg width="11" height="13" viewBox="0 0 11 13">
              <path d="M0 9h11v3H0z" fill="#d8d8c0" />
            </svg>
            <svg width="15" height="13" viewBox="0 0 15 13">
              <path d="M5 1h9v7H5zM1 4h9v8H1z" fill="#8c8414" stroke="#dcdcc4" strokeWidth="1.300" />
            </svg>
            <svg width="14" height="13" viewBox="0 0 14 13">
              <path d="M1 1l12 11M13 1L1 12" stroke="#e4e4d0" strokeWidth="2.200" />
            </svg>
          </ViewButtons>

          <Triad width="50" height="50" viewBox="0 0 50 50">
            <path d="M34 40V17" stroke="#4cb04c" strokeWidth="3" />
            <path d="M29 20l5-8 5 8z" fill="#2a7a2a" />
            <path d="M32 2l3 4 3-4M35 6v4" fill="none" stroke="#5a9a2a" strokeWidth="1" />
            <path d="M15 40h22" stroke="#b02a2a" strokeWidth="3" />
            <path d="M8 40l9-4v8z" fill="#8a1c1c" />
            <path d="M1 37l5 7M6 37l-5 7" stroke="#d8561c" strokeWidth="1.200" />
            <path d="M37 40l11-3-3 6-2 4-6-3z" fill="#1c2ab0" />
          </Triad>
        </Viewport>
        <EdgeStrip />
      </Workspace>

      <BottomBar>
        <Pager>
          <PagerIcon d="M3 2v9M10 2L5 6.500 10 11z" />
          <PagerIcon d="M9 2L4 6.500 9 11z" />
          <PagerIcon d="M4 2l5 4.500L4 11z" />
          <PagerIcon d="M10 2v9M3 2l5 4.500L3 11z" />
        </Pager>
        <BottomTab $w={64} $active>Modelo</BottomTab>
        <BottomTab $w={66}>Vistas 3D</BottomTab>
        <BottomTab $w={158}>Estudio de movimiento 1</BottomTab>
      </BottomBar>

      <StatusBar>
        <StatusCell $w={836}>Puerta</StatusCell>
        <StatusCell $w={150}>Completamente definida</StatusCell>
        <StatusCell $w={193}>Editando Ensamblaje</StatusCell>
        <StatusCell $w={67}>CGS</StatusCell>
        <StatusCell $w={25}><Tri dir="up" color="#555" /></StatusCell>
        <StatusCell $w={72}>
          <svg width="14" height="14" viewBox="0 0 14 14">
            <rect x=".5" y=".5" width="13" height="13" fill="#f4f6fa" stroke="#2a6ab8" />
            <text x="7" y="11" fontSize="11" fontWeight="700" fontFamily="Liberation Sans" textAnchor="middle" fill="#1c9a2a">?</text>
          </svg>
        </StatusCell>
        <svg width="16" height="16" viewBox="0 0 16 16">
          <path d="M10 1h5v5L6 15l-5-5z" fill="#f2c84a" stroke="#a67c10" />
          <circle cx="12" cy="4" r="1" fill="#fff" />
        </svg>
      </StatusBar>

      <TaskBar>
        <StartButton>
          <svg width="16" height="16" viewBox="0 0 16 16">
            <path d="M0 2.300l6.800-1v6.300H0zM7.600 1.200L16 0v7.600H7.600zM0 8.400h6.800v6.300l-6.800-1zM7.600 8.400H16V16l-8.400-1.200z" fill="#fff" />
          </svg>
        </StartButton>
        <SearchBox>Buscar en la web y en Windows</SearchBox>
        <TaskIcon>
          <svg width="20" height="16" viewBox="0 0 20 16">
            <path d="M5 1.500h10v13H5z" fill="none" stroke="#fff" strokeWidth="1.200" />
            <path d="M3 4H1v8h2M17 4h2v8h-2" fill="none" stroke="#fff" />
          </svg>
        </TaskIcon>
        <TaskIcon $run>
          <FaEdgeLegacy size={20} color="#0a78d4" />
        </TaskIcon>
        <TaskIcon>
          <svg width="20" height="22" viewBox="0 0 20 22">
            <path d="M1 7h18v14H1z" fill="#fff" />
            <path d="M6 7V3c0-3 8-3 8 0v4" fill="none" stroke="#fff" strokeWidth="1.500" />
            <path d="M6 10h3.500v3.500H6zM10.500 10H14v3.500h-3.500zM6 14.500h3.500V18H6zM10.500 14.500H14V18h-3.500z" fill="#111" />
          </svg>
        </TaskIcon>
        <TaskIcon $active>
          <svg width="26" height="28" viewBox="0 0 26 28">
            <path d="M2 7l11-6 11 5v17l-11 4-11-4z" fill="#c8242a" />
            <path d="M2 7l11 5 11-6" fill="none" stroke="#e8676a" />
            <text x="13" y="19" fontSize="9" fontWeight="700" fontFamily="Liberation Sans" textAnchor="middle" fill="#fff">S W</text>
            <text x="13" y="27" fontSize="7" fontWeight="700" fontFamily="Liberation Sans" textAnchor="middle" fill="#e8e8e8">2015</text>
          </svg>
        </TaskIcon>
        <TaskIcon $run>
          <svg width="26" height="26" viewBox="0 0 26 26">
            <ellipse cx="12" cy="15" rx="11" ry="9" fill="#d9e0e4" stroke="#7a8a90" />
            <circle cx="7" cy="13" r="2" fill="#d8321f" />
            <circle cx="12" cy="19" r="2" fill="#2aa63a" />
            <circle cx="17" cy="17" r="2" fill="#2f63c2" />
            <path d="M14 13L22 2l2 2-7 11z" fill="#d9a05a" stroke="#7a5a30" />
          </svg>
        </TaskIcon>
        <Tray>
          <svg width="14" height="10" viewBox="0 0 14 10">
            <path d="M1 8l6-6 6 6" fill="none" stroke="#f0f0f0" strokeWidth="1.300" />
          </svg>
          <svg width="16" height="16" viewBox="0 0 16 16">
            <path d="M0 0h16v12H11l-3 3-3-3H0z" fill="#fff" />
            <path d="M3 3h10M3 6h10M3 9h7" stroke="#111" />
          </svg>
          <Clock>08:50 p. m.<br />20/06/2016</Clock>
        </Tray>
      </TaskBar>
    </Screen>
  );
}
